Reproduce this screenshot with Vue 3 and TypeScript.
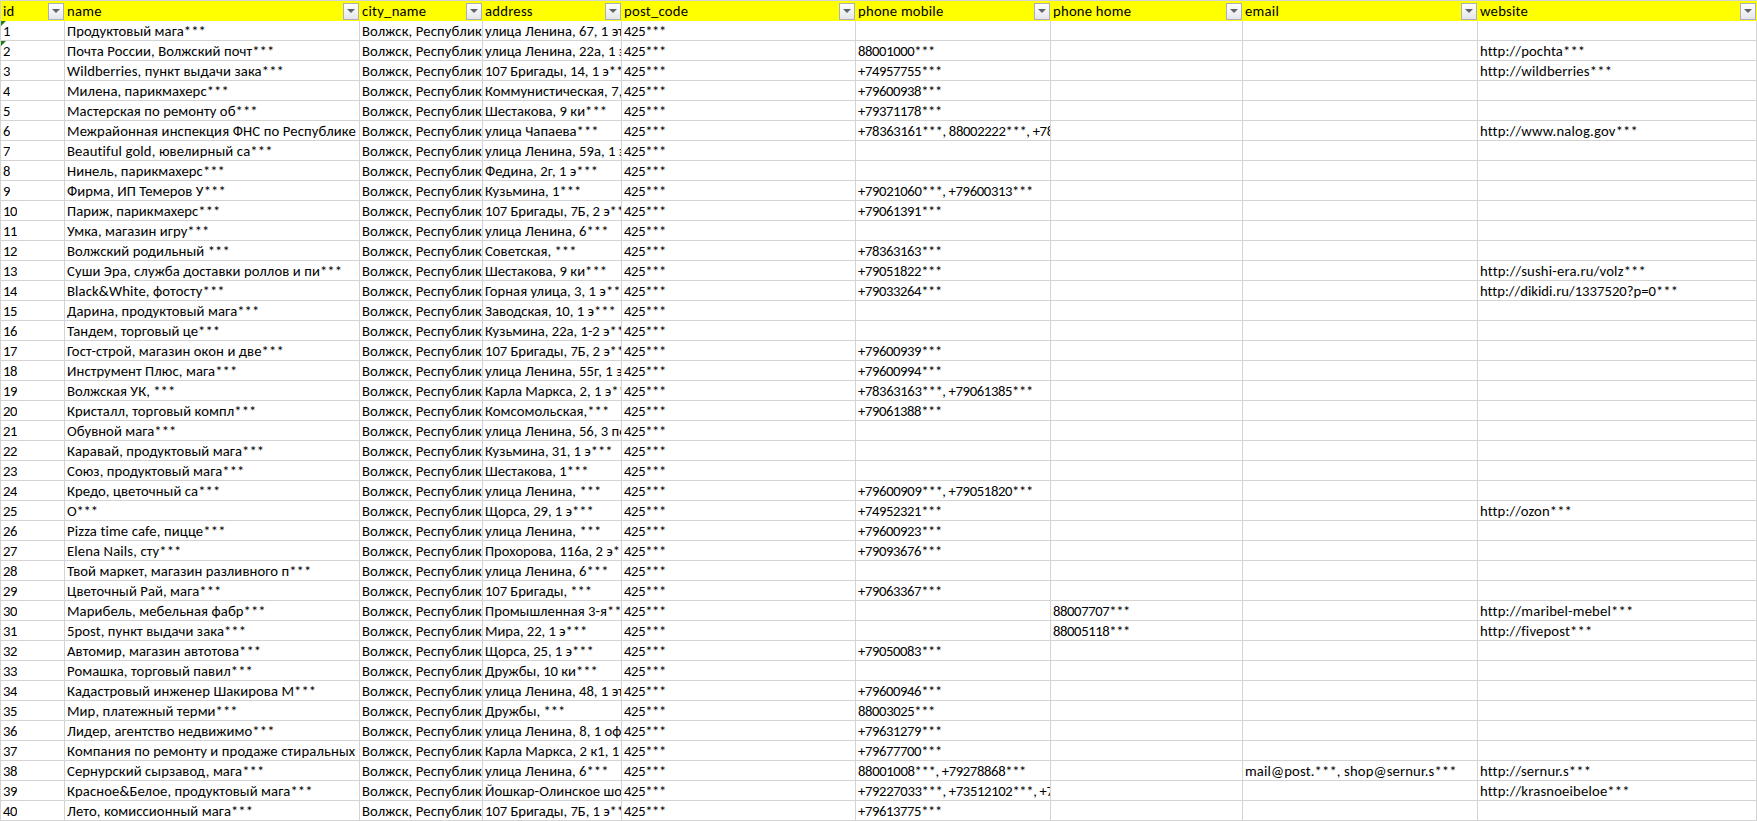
<script setup lang="ts">
interface Row {
  name: string
  address: string
  mobile?: string
  home?: string
  email?: string
  website?: string
}

const headers = ['id', 'name', 'city_name', 'address', 'post_code', 'phone mobile', 'phone home', 'email', 'website']

const rows: Row[] = [
  { name: 'Продуктовый мага***', address: 'улица Ленина, 67, 1 этаж***' },
  { name: 'Почта России, Волжский почт***', address: 'улица Ленина, 22а, 1 этаж***', mobile: '88001000***', website: 'http://pochta***' },
  { name: 'Wildberries, пункт выдачи зака***', address: '107 Бригады, 14, 1 э***', mobile: '+74957755***', website: 'http://wildberries***' },
  { name: 'Милена, парикмахерс***', address: 'Коммунистическая, 7, 1 этаж***', mobile: '+79600938***' },
  { name: 'Мастерская по ремонту об***', address: 'Шестакова, 9 ки***', mobile: '+79371178***' },
  { name: 'Межрайонная инспекция ФНС по Республике', address: 'улица Чапаева***', mobile: '+78363161***, 88002222***, +78363161***', website: 'http://www.nalog.gov***' },
  { name: 'Beautiful gold, ювелирный са***', address: 'улица Ленина, 59а, 1 этаж***' },
  { name: 'Нинель, парикмахерс***', address: 'Федина, 2г, 1 э***' },
  { name: 'Фирма, ИП Темеров У***', address: 'Кузьмина, 1***', mobile: '+79021060***, +79600313***' },
  { name: 'Париж, парикмахерс***', address: '107 Бригады, 7Б, 2 э***', mobile: '+79061391***' },
  { name: 'Умка, магазин игру***', address: 'улица Ленина, 6***' },
  { name: 'Волжский родильный ***', address: 'Советская, ***', mobile: '+78363163***' },
  { name: 'Суши Эра, служба доставки роллов и пи***', address: 'Шестакова, 9 ки***', mobile: '+79051822***', website: 'http://sushi-era.ru/volz***' },
  { name: 'Black&White, фотосту***', address: 'Горная улица, 3, 1 э***', mobile: '+79033264***', website: 'http://dikidi.ru/1337520?p=0***' },
  { name: 'Дарина, продуктовый мага***', address: 'Заводская, 10, 1 э***' },
  { name: 'Тандем, торговый це***', address: 'Кузьмина, 22а, 1-2 э***' },
  { name: 'Гост-строй, магазин окон и две***', address: '107 Бригады, 7Б, 2 э***', mobile: '+79600939***' },
  { name: 'Инструмент Плюс, мага***', address: 'улица Ленина, 55г, 1 этаж***', mobile: '+79600994***' },
  { name: 'Волжская УК, ***', address: 'Карла Маркса, 2, 1 э***', mobile: '+78363163***, +79061385***' },
  { name: 'Кристалл, торговый компл***', address: 'Комсомольская,***', mobile: '+79061388***' },
  { name: 'Обувной мага***', address: 'улица Ленина, 56, 3 пом***' },
  { name: 'Каравай, продуктовый мага***', address: 'Кузьмина, 31, 1 э***' },
  { name: 'Союз, продуктовый мага***', address: 'Шестакова, 1***' },
  { name: 'Кредо, цветочный са***', address: 'улица Ленина, ***', mobile: '+79600909***, +79051820***' },
  { name: 'О***', address: 'Щорса, 29, 1 э***', mobile: '+74952321***', website: 'http://ozon***' },
  { name: 'Pizza time cafe, пицце***', address: 'улица Ленина, ***', mobile: '+79600923***' },
  { name: 'Elena Nails, сту***', address: 'Прохорова, 116а, 2 э***', mobile: '+79093676***' },
  { name: 'Твой маркет, магазин разливного п***', address: 'улица Ленина, 6***' },
  { name: 'Цветочный Рай, мага***', address: '107 Бригады, ***', mobile: '+79063367***' },
  { name: 'Марибель, мебельная фабр***', address: 'Промышленная 3-я***', home: '88007707***', website: 'http://maribel-mebel***' },
  { name: '5post, пункт выдачи зака***', address: 'Мира, 22, 1 э***', home: '88005118***', website: 'http://fivepost***' },
  { name: 'Автомир, магазин автотова***', address: 'Щорса, 25, 1 э***', mobile: '+79050083***' },
  { name: 'Ромашка, торговый павил***', address: 'Дружбы, 10 ки***' },
  { name: 'Кадастровый инженер Шакирова М***', address: 'улица Ленина, 48, 1 этаж***', mobile: '+79600946***' },
  { name: 'Мир, платежный терми***', address: 'Дружбы, ***', mobile: '88003025***' },
  { name: 'Лидер, агентство недвижимо***', address: 'улица Ленина, 8, 1 офис***', mobile: '+79631279***' },
  { name: 'Компания по ремонту и продаже стиральных', address: 'Карла Маркса, 2 к1, 1 этаж***', mobile: '+79677700***' },
  { name: 'Сернурский сырзавод, мага***', address: 'улица Ленина, 6***', mobile: '88001008***, +79278868***', email: 'mail@post.***, shop@sernur.s***', website: 'http://sernur.s***' },
  { name: 'Красное&Белое, продуктовый мага***', address: 'Йошкар-Олинское шоссе***', mobile: '+79227033***, +73512102***, +79227033***', website: 'http://krasnoeibeloe***' },
  { name: 'Лето, комиссионный мага***', address: '107 Бригады, 7Б, 1 э***', mobile: '+79613775***' },
]

const city = 'Волжск, Республика Марий Эл'
const postCode = '425***'

function tracking(text: string): string {
  if (!text) return '0px'
  let total = 0
  for (const ch of text) {
    if (/[0-9+]/.test(ch)) total -= 0.43
    else if (ch === '*') total -= 0.3
    else if (/[a-zA-Z/:._&@]/.test(ch)) total += 0.25
    else total += 0.13
  }
  return (total / text.length).toFixed(3) + 'px'
}

function rowCells(r: Row, i: number): string[] {
  return [String(i + 1), r.name, city, r.address, postCode, r.mobile ?? '', r.home ?? '', r.email ?? '', r.website ?? '']
}
</script>

<template>
  <div class="sheet">
    <div v-for="h in headers" :key="h" class="head">
      <span class="head-label" :style="{ letterSpacing: tracking(h) }">{{ h }}</span>
      <span class="filter"><i class="arrow"></i></span>
    </div>
    <template v-for="(r, i) in rows" :key="i">
      <div v-for="(text, c) in rowCells(r, i)" :key="c" class="cell">
        <i v-if="i < 2 && c === 0" class="flag"></i>
        <span class="value" :style="{ letterSpacing: tracking(text) }">{{ text }}</span>
      </div>
    </template>
  </div>
</template>

<style>
html,
body {
  margin: 0;
  background: #ffffff;
  overflow: hidden;
}
</style>

<style scoped>
.sheet {
  display: grid;
  grid-template-columns: 64px 295px 123px 139px 234px 195px 192px 235px 279px;
  grid-auto-rows: 20px;
  width: 1756px;
  height: 820px;
  border-left: 1px solid #d4d4d4;
  border-top: 1px solid #d4d4d4;
  font-family: Carlito, Calibri, Lato, "Noto Sans", sans-serif;
  font-size: 14.67px;
  color: #000;
  background: #fff;
}

.head {
  display: flex;
  align-items: center;
  justify-content: space-between;
  min-width: 0;
  background: #ffff00;
  padding: 0 1px 0 2px;
}

.head-label {
  white-space: nowrap;
}

.filter {
  flex: none;
  display: flex;
  align-items: center;
  justify-content: center;
  box-sizing: border-box;
  width: 16px;
  height: 17px;
  border: 1px solid #a9b0bd;
  background: linear-gradient(#ffffff, #e4e6ea);
}

.arrow {
  width: 0;
  height: 0;
  border-left: 4px solid transparent;
  border-right: 4px solid transparent;
  border-top: 4px solid #5f6368;
}

.cell {
  position: relative;
  display: flex;
  align-items: center;
  box-sizing: border-box;
  min-width: 0;
  overflow: hidden;
  white-space: nowrap;
  padding-left: 2px;
  border-right: 1px solid #d4d4d4;
  border-bottom: 1px solid #d4d4d4;
}

.value {
  display: block;
  min-width: 0;
  overflow: hidden;
}

.flag {
  position: absolute;
  left: 0;
  top: 0;
  width: 0;
  height: 0;
  border-top: 5px solid #1d7a1d;
  border-right: 5px solid transparent;
}
</style>
